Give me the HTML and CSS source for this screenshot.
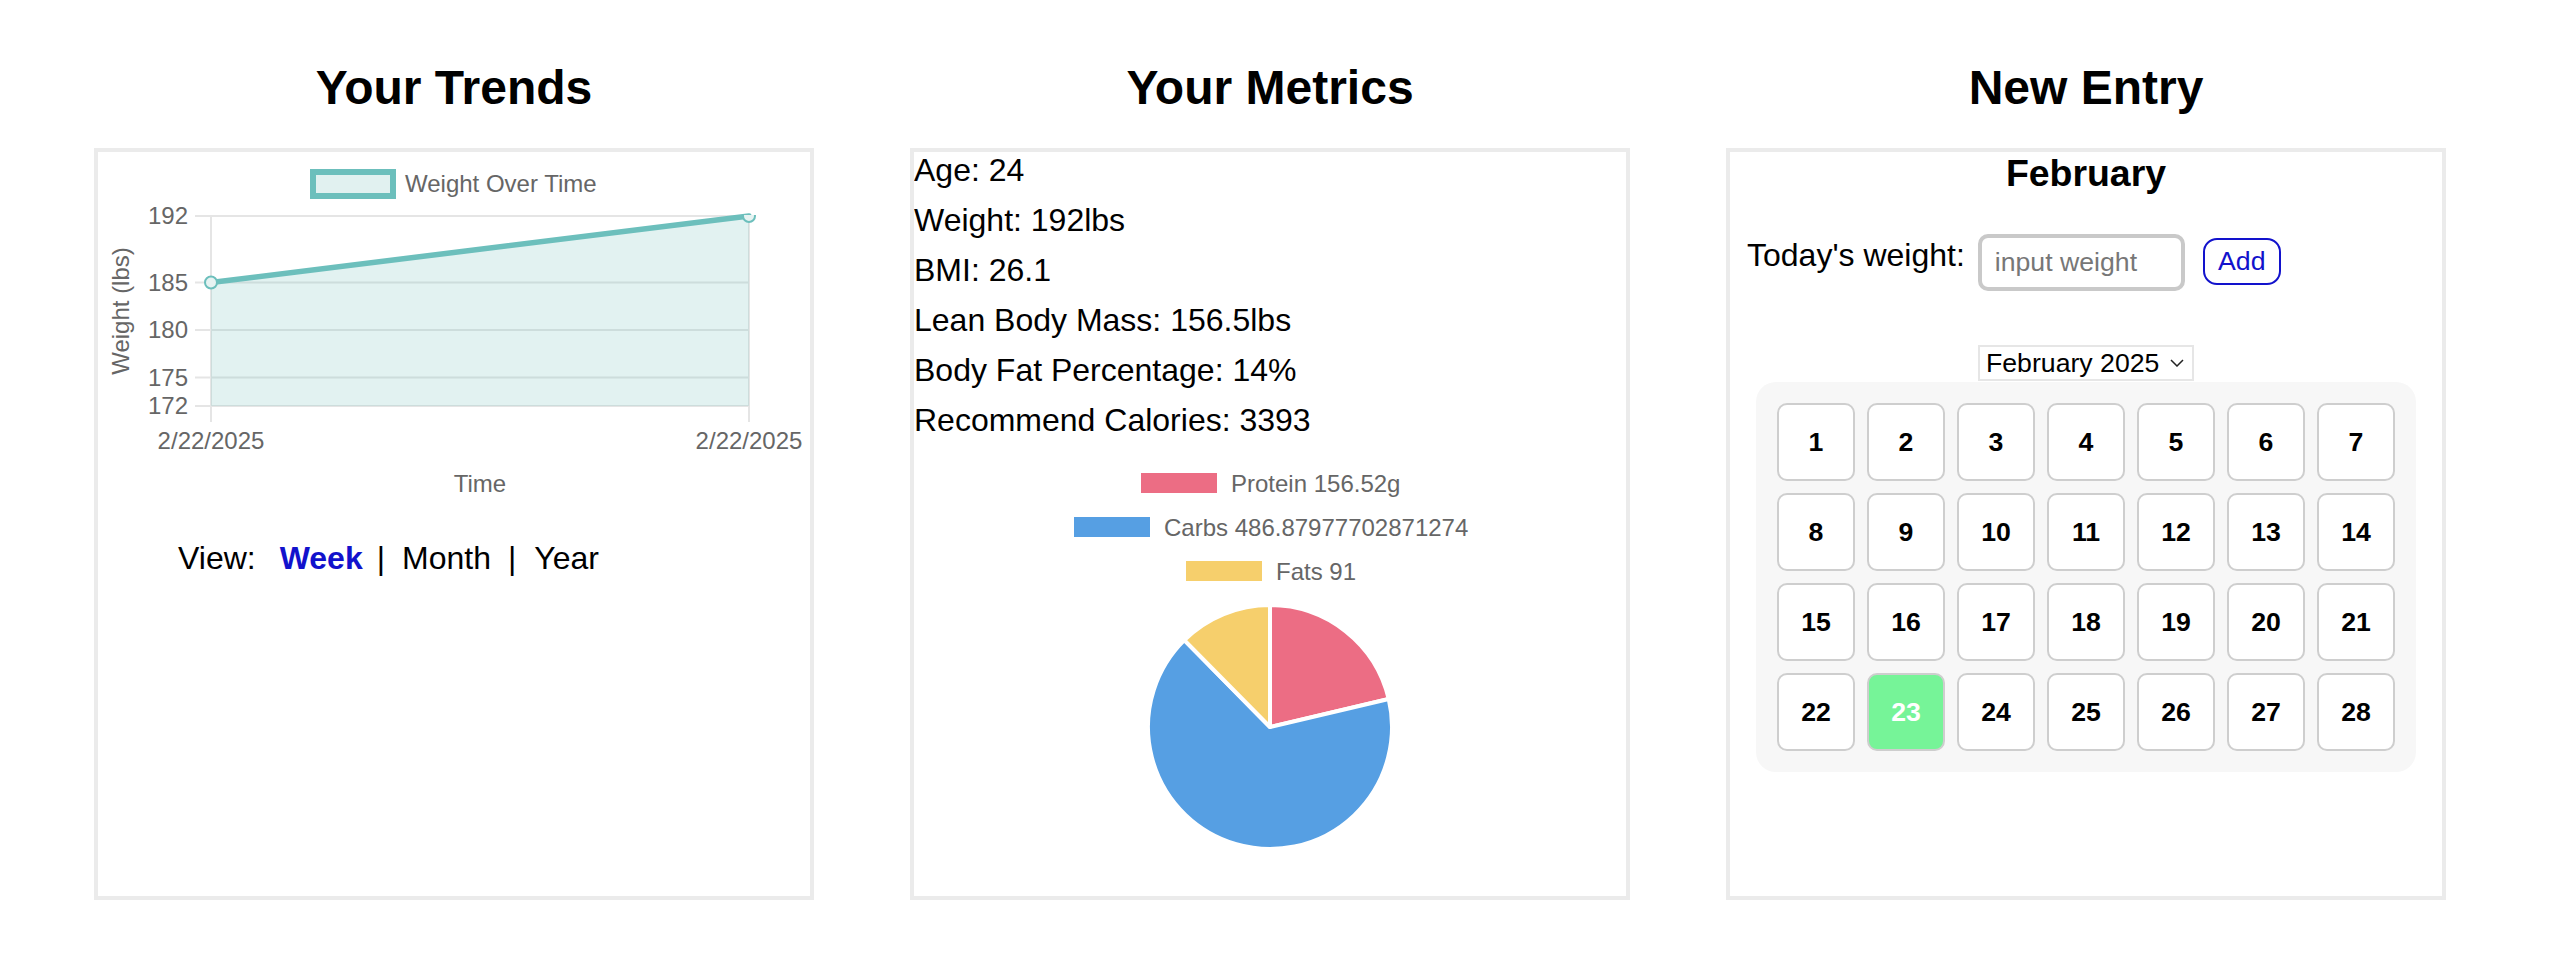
FILE: index.html
```html
<!DOCTYPE html>
<html lang="en">
<head>
<meta charset="utf-8">
<title>Fitness Dashboard</title>
<link rel="stylesheet" href="styles.css">
</head>
<body>
<main class="dashboard">
  <section class="column">
    <h2 class="column-title">Your Trends</h2>
    <div class="panel">
      <svg class="trend-chart" width="712" height="356" viewBox="0 0 712 356">
        <defs>
          <clipPath id="chartArea"><rect x="0" y="63" width="712" height="300"/></clipPath>
        </defs>
        <rect x="215" y="20" width="80" height="24" fill="#e1f1f0" stroke="#6cbfbc" stroke-width="6"/>
        <text class="chart-text" x="307" y="40">Weight Over Time</text>
        <g stroke="#e5e5e5" stroke-width="2">
          <line x1="97" y1="64" x2="651" y2="64"/>
          <line x1="97" y1="130.5" x2="651" y2="130.5"/>
          <line x1="97" y1="178" x2="651" y2="178"/>
          <line x1="97" y1="225.5" x2="651" y2="225.5"/>
          <line x1="97" y1="254" x2="651" y2="254"/>
          <line x1="113" y1="64" x2="113" y2="270"/>
          <line x1="651" y1="64" x2="651" y2="270"/>
        </g>
        <g class="chart-text" text-anchor="end">
          <text x="90" y="72">192</text>
          <text x="90" y="139">185</text>
          <text x="90" y="186">180</text>
          <text x="90" y="234">175</text>
          <text x="90" y="262">172</text>
        </g>
        <g class="chart-text" text-anchor="middle">
          <text x="113" y="297">2/22/2025</text>
          <text x="651" y="297">2/22/2025</text>
          <text x="382" y="340">Time</text>
          <text transform="translate(31 159) rotate(-90)">Weight (lbs)</text>
        </g>
        <polygon points="113,130.5 651,64 651,254 113,254" fill="rgba(108,190,187,0.2)"/>
        <line x1="113" y1="130.5" x2="651" y2="64" stroke="#6cbfbc" stroke-width="5.5" stroke-linecap="round"/>
        <g clip-path="url(#chartArea)" fill="#e6f3f2" stroke="#6cbfbc" stroke-width="2">
          <circle cx="113" cy="130.5" r="6"/>
          <circle cx="651" cy="64" r="6"/>
        </g>
      </svg>
      <div class="view-toggle">
        <span class="view-label">View:</span>
        <span class="view-option view-option--active">Week</span>
        <span class="view-sep">|</span>
        <span class="view-option view-option--month">Month</span>
        <span class="view-sep view-sep--second">|</span>
        <span class="view-option view-option--year">Year</span>
      </div>
    </div>
  </section>

  <section class="column">
    <h2 class="column-title">Your Metrics</h2>
    <div class="panel">
      <div class="metrics-list">
        <p class="metric">Age: 24</p>
        <p class="metric">Weight: 192lbs</p>
        <p class="metric">BMI: 26.1</p>
        <p class="metric">Lean Body Mass: 156.5lbs</p>
        <p class="metric">Body Fat Percentage: 14%</p>
        <p class="metric">Recommend Calories: 3393</p>
      </div>
      <svg class="macro-chart" width="712" height="440" viewBox="0 0 712 440">
        <rect x="225" y="32" width="80" height="24" fill="#ec6d84" stroke="#fff" stroke-width="4"/>
        <text class="chart-text" x="317" y="52.6">Protein 156.52g</text>
        <rect x="158" y="76" width="80" height="24" fill="#569fe3" stroke="#fff" stroke-width="4"/>
        <text class="chart-text" x="250" y="96.6">Carbs 486.87977702871274</text>
        <rect x="270" y="120" width="80" height="24" fill="#f6cf6c" stroke="#fff" stroke-width="4"/>
        <text class="chart-text" x="362" y="140.6">Fats 91</text>
        <g stroke="#fff" stroke-width="4" stroke-linejoin="round">
          <path d="M356,288 L356,166 A122,122 0 0 1 474.74,259.99 Z" fill="#ec6d84"/>
          <path d="M356,288 L474.74,259.99 A122,122 0 1 1 270.32,201.15 Z" fill="#569fe3"/>
          <path d="M356,288 L270.32,201.15 A122,122 0 0 1 356,166 Z" fill="#f6cf6c"/>
        </g>
      </svg>
    </div>
  </section>

  <section class="column">
    <h2 class="column-title">New Entry</h2>
    <div class="panel panel--entry">
      <h3 class="entry-month">February</h3>
      <div class="weight-row">
        <span class="weight-label">Today's weight:</span>
        <input class="weight-input" type="text" placeholder="input weight">
        <button class="add-btn" type="button">Add</button>
      </div>
      <div class="month-select">
        <span>February 2025</span>
        <svg class="chevron" width="14" height="8" viewBox="0 0 14 8"><polyline points="1,1 7,7 13,1" fill="none" stroke="#222" stroke-width="1.5"/></svg>
      </div>
      <div class="calendar">
        <button class="day" type="button">1</button>
        <button class="day" type="button">2</button>
        <button class="day" type="button">3</button>
        <button class="day" type="button">4</button>
        <button class="day" type="button">5</button>
        <button class="day" type="button">6</button>
        <button class="day" type="button">7</button>
        <button class="day" type="button">8</button>
        <button class="day" type="button">9</button>
        <button class="day" type="button">10</button>
        <button class="day" type="button">11</button>
        <button class="day" type="button">12</button>
        <button class="day" type="button">13</button>
        <button class="day" type="button">14</button>
        <button class="day" type="button">15</button>
        <button class="day" type="button">16</button>
        <button class="day" type="button">17</button>
        <button class="day" type="button">18</button>
        <button class="day" type="button">19</button>
        <button class="day" type="button">20</button>
        <button class="day" type="button">21</button>
        <button class="day" type="button">22</button>
        <button class="day day--today" type="button">23</button>
        <button class="day" type="button">24</button>
        <button class="day" type="button">25</button>
        <button class="day" type="button">26</button>
        <button class="day" type="button">27</button>
        <button class="day" type="button">28</button>
      </div>
    </div>
  </section>
</main>
</body>
</html>
```

FILE: styles.css
```css
html, body {
  margin: 0;
  padding: 0;
  background: #ffffff;
}

body {
  font-family: "Liberation Sans", Arial, Helvetica, sans-serif;
  color: #000;
}

.dashboard {
  display: flex;
  gap: 96px;
  padding: 60px 0 0 94px;
}

.column {
  width: 720px;
  display: flex;
  flex-direction: column;
}

.column-title {
  margin: 0 0 33px;
  font-size: 48px;
  font-weight: 700;
  line-height: normal;
  text-align: center;
}

.panel {
  box-sizing: border-box;
  width: 720px;
  height: 752px;
  border: 4px solid #ebebeb;
  overflow: hidden;
}

/* Trends chart */
.trend-chart {
  display: block;
}

.chart-text {
  font-family: "Liberation Sans", Arial, Helvetica, sans-serif;
  font-size: 24px;
  fill: #666666;
}

.view-toggle {
  display: flex;
  align-items: baseline;
  margin-top: 32px;
  padding-left: 80px;
  font-size: 32px;
  line-height: normal;
}

.view-option--active {
  margin-left: 24px;
  font-weight: 700;
  color: #1212cc;
}

.view-sep {
  margin-left: 14px;
}

.view-option--month {
  margin-left: 17px;
}

.view-sep--second {
  margin-left: 17px;
}

.view-option--year {
  margin-left: 18px;
}

/* Metrics */
.metrics-list {
  display: flex;
  flex-direction: column;
  gap: 13px;
  font-size: 32px;
  line-height: normal;
}

.metric {
  margin: 0;
}

.macro-chart {
  display: block;
}

/* New entry */
.panel--entry {
  display: flex;
  flex-direction: column;
}

.entry-month {
  margin: 0;
  font-size: 37.44px;
  font-weight: 700;
  line-height: normal;
  text-align: center;
}

.weight-row {
  display: flex;
  align-items: flex-start;
  margin-top: 39px;
  padding-left: 17px;
}

.weight-label {
  margin-top: 2.5px;
  font-size: 32px;
  line-height: normal;
}

.weight-input {
  box-sizing: border-box;
  width: 207px;
  height: 57px;
  margin: 0 0 0 13px;
  padding: 0 13px;
  border: 4px solid #c9c9c9;
  border-radius: 10px;
  font-family: "Liberation Sans", Arial, Helvetica, sans-serif;
  font-size: 26.67px;
  color: #000;
  background: #fff;
  outline: none;
}

.weight-input::placeholder {
  color: #777777;
}

.add-btn {
  box-sizing: border-box;
  width: 78px;
  height: 47px;
  margin: 4px 0 0 18px;
  padding: 0;
  border: 2px solid #1212cc;
  border-radius: 14px;
  background: #fff;
  color: #1212cc;
  font-family: "Liberation Sans", Arial, Helvetica, sans-serif;
  font-size: 26.67px;
}

.month-select {
  align-self: center;
  box-sizing: border-box;
  width: 216px;
  height: 36px;
  margin-top: 54px;
  padding-left: 6px;
  border: 2px solid #e6e6e6;
  display: flex;
  align-items: center;
  gap: 11px;
  font-size: 26.67px;
  line-height: normal;
  background: #fff;
}

.chevron {
  display: block;
  flex: none;
}

.calendar {
  align-self: center;
  box-sizing: border-box;
  width: 660px;
  margin-top: 1px;
  padding: 21px;
  background: #f7f7f7;
  border-radius: 20px;
  display: grid;
  grid-template-columns: repeat(7, 78px);
  grid-auto-rows: 78px;
  gap: 12px;
}

.day {
  box-sizing: border-box;
  margin: 0;
  padding: 0;
  border: 2px solid #cecece;
  border-radius: 10px;
  background: #ffffff;
  color: #000;
  font-family: "Liberation Sans", Arial, Helvetica, sans-serif;
  font-size: 26.67px;
  font-weight: 700;
}

.day--today {
  background: #76f498;
  color: #ffffff;
}
```
